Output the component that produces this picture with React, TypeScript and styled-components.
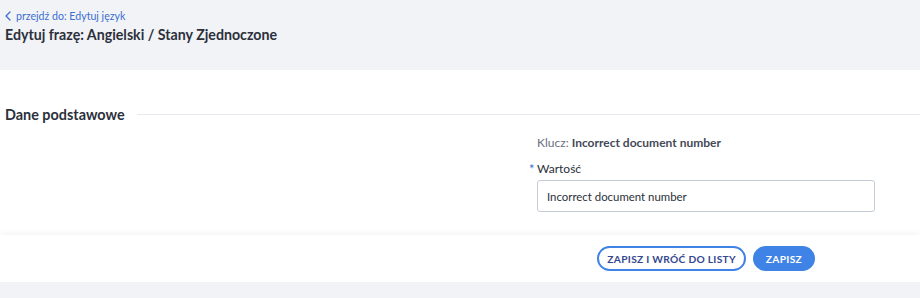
import React from "react";
import styled, { createGlobalStyle } from "styled-components";

const Global = createGlobalStyle`
  html, body { margin: 0; padding: 0; background: #f2f3f7; }
  body { font-family: "Lato", "Open Sans", sans-serif; color: #2b303b; }
  * { box-sizing: border-box; }
`;

const Page = styled.div`
  width: 920px;
  height: 298px;
  display: flex;
  flex-direction: column;
  background: #f2f3f7;
`;

const Header = styled.header`
  height: 70px;
  padding: 9px 5px 0;
  display: flex;
  flex-direction: column;
  gap: 2px;
`;

const BackLink = styled.a`
  display: flex;
  align-items: center;
  gap: 5px;
  font-size: 10.6px;
  color: #3a6fd0;
  text-decoration: none;
  line-height: 14px;
`;

const Title = styled.h1`
  margin: 0;
  font-size: 14.2px;
  font-weight: 700;
  line-height: 20px;
  color: #2b303b;
`;

const Section = styled.section`
  background: #fff;
  height: 165px;
  padding-top: 36px;
`;

const SectionHead = styled.div`
  display: flex;
  align-items: center;
  gap: 12px;
  padding-left: 5px;
  height: 16px;
`;

const SectionTitle = styled.h2`
  margin: 0;
  font-size: 14.4px;
  font-weight: 700;
  color: #2b303b;
  white-space: nowrap;
`;

const Rule = styled.div`
  flex: 1;
  height: 1px;
  background: #e8e9ee;
`;

const Form = styled.div`
  margin-left: 537px;
  width: 338px;
  padding-top: 14px;
  display: flex;
  flex-direction: column;
`;

const KeyLine = styled.div`
  font-size: 12px;
  line-height: 14px;
  color: #6b7080;
  b { color: #454a57; font-weight: 700; }
`;

const Label = styled.label`
  position: relative;
  margin-top: 12px;
  font-size: 12px;
  line-height: 14px;
  color: #2b303b;
`;

const Star = styled.span`
  position: absolute;
  left: -8px;
  top: 0;
  color: #3a6fd0;
  font-size: 13px;
`;

const Input = styled.input`
  margin-top: 4px;
  height: 32px;
  width: 338px;
  border: 1px solid #c6cbd8;
  border-radius: 3px;
  padding: 0 9px;
  font-family: inherit;
  font-size: 11.4px;
  color: #2b303b;
  outline: none;
`;

const Footer = styled.footer`
  position: relative;
  height: 47px;
  background: #fff;
  box-shadow: 0 -3px 5px rgba(0, 0, 0, 0.035);
  display: flex;
  align-items: center;
  justify-content: flex-end;
  gap: 7px;
  padding-right: 105px;
`;

const Button = styled.button<{ $primary?: boolean }>`
  height: 25px;
  border-radius: 13px;
  padding: 0 ${(p) => (p.$primary ? "11px" : "8px")};
  border: 2px solid #3f83e6;
  background: ${(p) => (p.$primary ? "#3f83e6" : "#fff")};
  color: ${(p) => (p.$primary ? "#fff" : "#34478f")};
  font-family: inherit;
  font-size: 10.2px;
  font-weight: 700;
  letter-spacing: 0.3px;
  cursor: pointer;
`;

export default function App() {
  return (
    <Page>
      <Global />
      <Header>
        <BackLink href="#">
          <svg width="6" height="10" viewBox="0 0 6 10" fill="none">
            <path d="M5 1L1 5l4 4" stroke="#3a6fd0" strokeWidth="1.3" strokeLinecap="round" strokeLinejoin="round" />
          </svg>
          przejdź do: Edytuj język
        </BackLink>
        <Title>Edytuj frazę: Angielski / Stany Zjednoczone</Title>
      </Header>
      <Section>
        <SectionHead>
          <SectionTitle>Dane podstawowe</SectionTitle>
          <Rule />
        </SectionHead>
        <Form>
          <KeyLine>
            Klucz: <b>Incorrect document number</b>
          </KeyLine>
          <Label>
            <Star>*</Star>Wartość
          </Label>
          <Input defaultValue="Incorrect document number" />
        </Form>
      </Section>
      <Footer>
        <Button>ZAPISZ I WRÓĆ DO LISTY</Button>
        <Button $primary>ZAPISZ</Button>
      </Footer>
    </Page>
  );
}
